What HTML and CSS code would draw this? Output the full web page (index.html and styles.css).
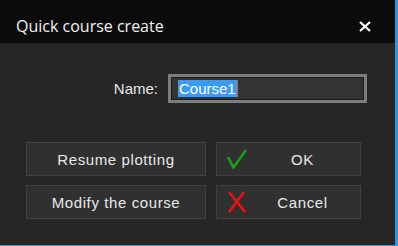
FILE: index.html
```html
<!DOCTYPE html>
<html>
<head>
  <meta charset="utf-8">
  <link rel="stylesheet" href="styles.css">
</head>
<body>
  <div class="window">
    <div class="titlebar">
      <span class="title">Quick course create</span>
      <svg class="close" width="14" height="11" viewBox="0 0 14 11">
        <path d="M2 1 L12 10 M12 1 L2 10" stroke="#fff" stroke-width="2.2" fill="none"/>
      </svg>
    </div>
    <div class="content">
      <div class="name-row">
        <label class="name-label">Name:</label>
        <div class="field"><span class="selected">Course1</span></div>
      </div>
      <div class="buttons">
        <div class="btn">Resume plotting</div>
        <div class="btn btn-icon">
          <svg class="icon" width="20" height="20" viewBox="0 0 20 20">
            <path d="M1 8 L6.5 18.5 L19 1" stroke="#17a317" stroke-width="2.6" fill="none" stroke-linejoin="miter"/>
          </svg>
          <span class="label">OK</span>
        </div>
        <div class="btn">Modify the course</div>
        <div class="btn btn-icon">
          <svg class="icon" width="20" height="22" viewBox="0 0 20 22">
            <path d="M2 1 L18 21 M17 1 L2 21" stroke="#ee1111" stroke-width="2.6" fill="none"/>
          </svg>
          <span class="label">Cancel</span>
        </div>
      </div>
    </div>
  </div>
</body>
</html>
```

FILE: styles.css
```css
html, body {
  margin: 0;
  padding: 0;
  background: #1e9cf0;
}
.window {
  width: 395px;
  height: 245px;
  background: #262626;
  display: flex;
  flex-direction: column;
}
.titlebar {
  height: 43px;
  box-sizing: border-box;
  background: #0b0b0b;
  display: flex;
  justify-content: space-between;
  align-items: flex-start;
  padding: 16px 23px 0 16px;
}
.title {
  font-family: "Open Sans", sans-serif;
  font-size: 16px;
  line-height: 20px;
  color: #f2f2f2;
}
.close {
  margin-top: 5px;
  display: block;
}
.content {
  padding: 31px 0 0 26px;
  font-family: "Liberation Sans", Arial, sans-serif;
  font-size: 15px;
  color: #e8e8e8;
}
.name-row {
  display: flex;
  gap: 10px;
}
.name-label {
  width: 132px;
  text-align: right;
  line-height: 29px;
}
.field {
  width: 199px;
  height: 29px;
  box-sizing: border-box;
  border: 3px solid #7d7d7d;
  background: #333;
  box-shadow: inset 0 0 0 1px #1c1c1c;
  padding: 3px 0 0 7px;
}
.selected {
  display: inline-block;
  background: #3b9bf4;
  color: #fff;
  line-height: 17px;
  padding: 0 1px;
  border-right: 1px solid #c86a1a;
}
.buttons {
  margin-top: 39px;
  display: grid;
  grid-template-columns: 180px 145px;
  grid-auto-rows: 34px;
  column-gap: 10px;
  row-gap: 9px;
}
.btn {
  box-sizing: border-box;
  background: #303030;
  border: 1px solid #414141;
  display: flex;
  align-items: center;
  justify-content: center;
  letter-spacing: 0.6px;
}
.btn-icon {
  justify-content: flex-start;
  padding-left: 10px;
}
.icon {
  display: block;
  width: 20px;
  flex: none;
}
.btn-icon .label {
  flex: 1;
  text-align: center;
  padding-right: 2px;
}
```
